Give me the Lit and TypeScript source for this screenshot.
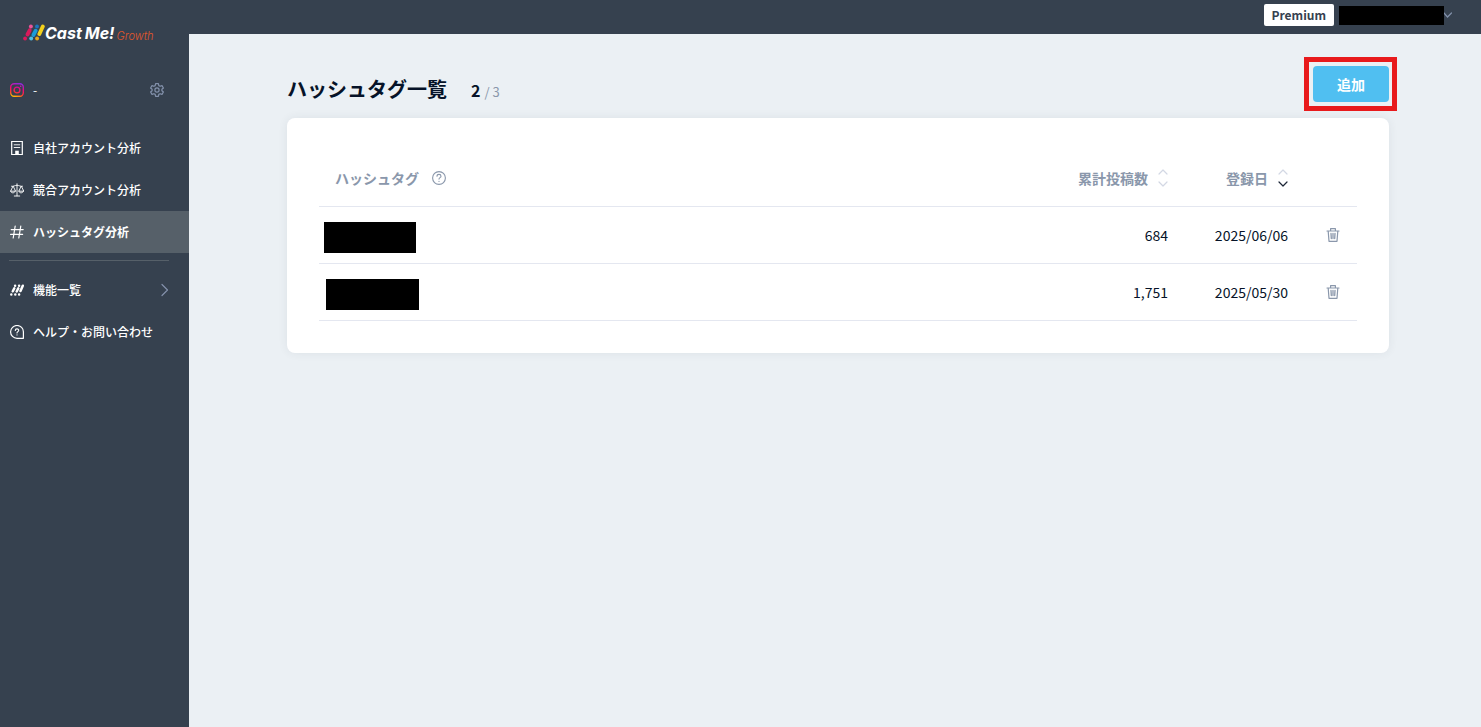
import { LitElement, html, css, svg, nothing } from "lit";
import { customElement, state } from "lit/decorators.js";
import { classMap } from "lit/directives/class-map.js";

const icon = (body: unknown, size = 14, box = 14) => html`<svg
  class="icon"
  width=${size}
  height=${size}
  viewBox="0 0 ${box} ${box}"
  fill="none"
  stroke="currentColor"
  stroke-linecap="round"
  stroke-linejoin="round"
  aria-hidden="true"
>${body}</svg>`;

const icons = {
  building: svg`<path d="M1.700 13.500V.5h10.600v13z" stroke-width="1.200" stroke-linejoin="miter"/><path d="M4.200 3.800h5.600M4.200 6.500h5.600" stroke-width=".9"/><path d="M5.200 13.500V9.700h3.600v3.800z" fill="currentColor" stroke="none"/>`,
  scales: svg`<path d="M7 .8v12M4.300 13h5.400M1.500 3.300c2 .4 3.500-1 5.500-1s3.500 1.400 5.500 1M2.900 3.400.6 8.200h4.600zM11.100 3.400 8.800 8.200h4.600zM.6 8.200c.3 2.300 4.300 2.300 4.600 0M8.800 8.200c.3 2.300 4.300 2.300 4.600 0" stroke-width=".9"/>`,
  hash: svg`<path d="M5.200 1 3.200 13M10.800 1l-2 12M1.200 4.600h12M.6 9.400h12" stroke-width="1.200"/>`,
  bars: svg`<g stroke-width="2.500"><path d="M5.100 2.700v0M4.300 5.300 2.800 8.300M1.300 11.500v0M9.100 2.700v0M8.300 5.300 6.700 8.500M5.300 11.500v0M12.800 2.700 10.500 8M9.100 11.500v0"/></g>`,
  help: svg`<path d="M13.400 13.300H7A6.400 6.400 0 1 1 13.400 7z" stroke-width="1.200"/><path d="M5.300 5.500c0-2.100 3.400-2.100 3.400-.1 0 1.200-1.700 1.200-1.700 2.500M7 9.800v.2" stroke-width="1.100"/>`,
  question: svg`<circle cx="7" cy="7" r="6.400" stroke-width="1.100"/><path d="M5 5.300c0-2.600 4-2.500 4-.1 0 1.500-2 1.400-2 2.900M7 10.300v.2" stroke-width="1.100"/>`,
  gear: svg`<path d="M5.600.7h2.800l.4 1.900 1.300.7 1.900-.7 1.400 2.400-1.500 1.300v1.400l1.500 1.300-1.400 2.400-1.900-.7-1.300.7-.4 1.900H5.600l-.4-1.900-1.300-.7-1.900.7L.6 9l1.500-1.300V6.300L.6 5 2 2.600l1.900.7 1.300-.7z" stroke-width="1.200"/><circle cx="7" cy="7" r="2.100" stroke-width="1.200"/>`,
  trash: svg`<path d="M1 3h12M4.600 2.800V.7h4.800v2.100M2.200 3.200l.8 10.100h8l.8-10.100" stroke-width="1.200"/><path d="M5 5.500l.3 5M7 5.500v5M9 5.500l-.3 5" stroke-width="1.300"/>`,
  right: svg`<path d="M4 1.500 9.500 7 4 12.500" stroke-width="1.200"/>`,
};

interface MenuItem {
  label: string;
  icon: keyof typeof icons;
  current?: boolean;
  more?: boolean;
}

const analysisMenu: MenuItem[] = [
  { label: "自社アカウント分析", icon: "building" },
  { label: "競合アカウント分析", icon: "scales" },
  { label: "ハッシュタグ分析", icon: "hash", current: true },
];

const supportMenu: MenuItem[] = [
  { label: "機能一覧", icon: "bars", more: true },
  { label: "ヘルプ・お問い合わせ", icon: "help" },
];

const rows = [
  { posts: 684, date: "2025/06/06", wide: false },
  { posts: 1751, date: "2025/05/30", wide: true },
];

@customElement("app-sidebar")
class AppSidebar extends LitElement {
  static styles = css`
    :host {
      display: block;
      box-sizing: border-box;
      padding-top: 22px;
      background: #36414f;
      color: #fff;
    }
    .icon {
      display: block;
      flex: none;
    }
    .logo {
      display: flex;
      align-items: center;
      height: 22px;
      padding-left: 23px;
      color: #fff;
      text-decoration: none;
      white-space: nowrap;
    }
    .name {
      display: flex;
      gap: 3px;
      font: italic 700 16px/22px Inter, sans-serif;
    }
    .product {
      margin: 5px 0 0 2px;
      color: #e2572b;
      font: italic 300 11px/18px Inter, sans-serif;
    }
    .account {
      display: flex;
      align-items: center;
      gap: 9px;
      height: 42px;
      margin: 25px 25px 16px 10px;
      font-size: 12px;
    }
    .settings {
      margin-left: auto;
      padding: 0;
      border: 0;
      background: none;
      color: #8391ab;
    }
    .item {
      display: flex;
      align-items: center;
      gap: 9px;
      height: 42px;
      padding: 0 17px 0 10px;
      color: #fff;
      font-size: 12px;
      font-weight: 500;
      text-decoration: none;
      white-space: nowrap;
    }
    .current {
      background: #566069;
      font-weight: 700;
    }
    .more {
      margin-left: auto;
      color: #8391ab;
    }
    .divider {
      height: 1px;
      margin: 7px 20px 8px 9px;
      border: 0;
      background: #566069;
    }
  `;

  private item(entry: MenuItem) {
    return html`<a
      href="#"
      class=${classMap({ item: true, current: !!entry.current })}
      aria-current=${entry.current ? "page" : nothing}
      >${icon(icons[entry.icon])}<span>${entry.label}</span>${entry.more
        ? html`<span class="more">${icon(icons.right)}</span>`
        : nothing}</a
    >`;
  }

  render() {
    return html`
      <a class="logo" href="#">
        <svg width="22" height="18" viewBox="0 0 22 18" fill="none" stroke-linecap="round" stroke-width="3.900" aria-hidden="true">
          <path stroke="#d91a5b" d="M6.700 6.300 4.500 10.500" />
          <path stroke="#d91a5b" d="M2.100 14.500v0" />
          <path stroke="#e8549a" d="M7.900 2.500v0" />
          <path stroke="#1c9bd8" d="M12.700 6.700 10.400 11" />
          <path stroke="#1c75bc" d="M14 2.500v0" />
          <path stroke="#4fc0e8" d="M8.200 14.500v0" />
          <path stroke="#f3d11c" d="M19.800 2.500 16.400 10" />
          <path stroke="#e9a51c" d="M14.100 14.500v0" />
        </svg>
        <span class="name"><span>Cast</span> <span>Me!</span></span><span class="product">Growth</span>
      </a>
      <div class="account">
        <svg class="icon" width="14" height="14" viewBox="0 0 14 14" fill="none" aria-hidden="true">
          <defs>
            <linearGradient id="insta" gradientUnits="userSpaceOnUse" x1="9" y1="0" x2="5" y2="14">
              <stop offset="0" stop-color="#8a2be2" />
              <stop offset=".4" stop-color="#f0077e" />
              <stop offset=".75" stop-color="#ff3b30" />
              <stop offset="1" stop-color="#ffc400" />
            </linearGradient>
          </defs>
          <rect x=".7" y=".7" width="12.600" height="12.600" rx="3.500" stroke="url(#insta)" stroke-width="1.400" />
          <circle cx="7" cy="7" r="2.900" stroke="url(#insta)" stroke-width="1.400" />
          <circle cx="10.700" cy="3.300" r=".8" fill="#d01bb0" />
        </svg>
        <span>-</span>
        <button class="settings" aria-label="設定">${icon(icons.gear)}</button>
      </div>
      <nav>
        ${analysisMenu.map((entry) => this.item(entry))}
        <hr class="divider" />
        ${supportMenu.map((entry) => this.item(entry))}
      </nav>
    `;
  }
}

@customElement("hashtag-table")
class HashtagTable extends LitElement {
  @state() private sortKey = "date";

  static styles = css`
    :host {
      display: block;
      padding: 32px;
      border-radius: 8px;
      background: #fff;
      box-shadow: 0 0 10px rgba(54, 65, 79, 0.08);
    }
    .icon {
      display: block;
      flex: none;
    }
    .table {
      width: 100%;
      border-collapse: separate;
      border-spacing: 0;
      table-layout: fixed;
      font-size: 14px;
    }
    .head,
    .cell {
      box-sizing: border-box;
      height: 57px;
      padding: 0 16px;
      border-bottom: 1px solid #e4e7f0;
      text-align: right;
    }
    .head {
      color: #8a97ab;
      font-weight: 700;
    }
    .tag {
      padding-left: 5px;
    }
    .title,
    .sort {
      display: flex;
      align-items: center;
    }
    .title {
      gap: 13px;
    }
    .sort {
      gap: 10px;
      margin-left: auto;
      padding: 0;
      border: 0;
      background: none;
      color: inherit;
      font: inherit;
      white-space: nowrap;
    }
    .posts {
      width: 140px;
    }
    .date {
      width: 120px;
    }
    .action {
      width: 53px;
    }
    .arrow {
      stroke: #d3d8e4;
    }
    .active {
      stroke: #1b2536;
    }
    .mask {
      display: block;
      width: 92px;
      height: 31px;
      margin-top: 4px;
      background: #000;
    }
    .wide {
      width: 93px;
      margin-left: 2px;
    }
    .delete {
      display: block;
      margin: 0 auto;
      padding: 0;
      border: 0;
      background: none;
      color: #8a97ab;
    }
    .action-cell {
      padding: 0 8px 0 12px;
    }
  `;

  private sortButton(key: string, label: string) {
    return html`<button class="sort" @click=${() => (this.sortKey = key)}>
      ${label}
      <svg width="10" height="18" viewBox="0 0 10 18" fill="none" stroke-width="1.200" stroke-linecap="round" stroke-linejoin="round" aria-hidden="true">
        <path class="arrow" d="M1 5 5 1l4 4" />
        <path class=${classMap({ arrow: true, active: this.sortKey === key })} d="M1 13l4 4 4-4" />
      </svg>
    </button>`;
  }

  render() {
    return html`<table class="table">
      <thead>
        <tr>
          <th class="head"><span class="title">ハッシュタグ ${icon(icons.question)}</span></th>
          <th class="head posts">${this.sortButton("posts", "累計投稿数")}</th>
          <th class="head date">${this.sortButton("date", "登録日")}</th>
          <th class="head action"></th>
        </tr>
      </thead>
      <tbody>
        ${rows.map(
          (row) => html`<tr>
            <td class="cell tag"><span class=${classMap({ mask: true, wide: row.wide })}></span></td>
            <td class="cell">${row.posts.toLocaleString("en-US")}</td>
            <td class="cell">${row.date}</td>
            <td class="cell action-cell"><button class="delete" aria-label="削除">${icon(icons.trash)}</button></td>
          </tr>`
        )}
      </tbody>
    </table>`;
  }
}

@customElement("app-root")
class AppRoot extends LitElement {
  static styles = css`
    :host {
      display: grid;
      grid-template: 34px 1fr / 189px 1fr;
      min-height: 100vh;
      background: #ebf0f4;
      color: #061328;
      font-family: "Noto Sans CJK JP", sans-serif;
      font-size: 14px;
      line-height: 20px;
    }
    .side {
      grid-row: 1 / 3;
    }
    .top {
      display: flex;
      align-items: center;
      justify-content: flex-end;
      padding: 0 29px 4px 0;
      background: #36414f;
    }
    .plan {
      height: 22px;
      padding: 0 8px;
      border-radius: 2px;
      background: #fff;
      color: #36414f;
      font-size: 12px;
      font-weight: 700;
      line-height: 22px;
    }
    .user {
      display: flex;
      align-items: center;
      margin-left: 5px;
      padding: 0;
      border: 0;
      background: none;
      color: #8391ab;
    }
    .mask {
      width: 105px;
      height: 19px;
      background: #000;
    }
    .main {
      min-width: 0;
      padding: 32px 92px 32px 98px;
    }
    .bar {
      display: flex;
      align-items: flex-start;
      justify-content: space-between;
      height: 52px;
    }
    .heading {
      display: flex;
      align-items: baseline;
      padding-top: 8px;
    }
    .title {
      margin: 0 24px 0 0;
      font-size: 20px;
      line-height: 30px;
    }
    .count {
      font-size: 16px;
      font-weight: 700;
    }
    .limit {
      margin-left: 4px;
      color: #8a97ab;
      font-size: 13px;
    }
    .spot {
      position: relative;
    }
    .add {
      width: 76px;
      height: 36px;
      padding: 0;
      border: 0;
      border-radius: 4px;
      background: #50bff1;
      color: #fff;
      font: inherit;
      font-weight: 700;
    }
    .ring {
      position: absolute;
      inset: -9px -8px -9px -9px;
      border: 5px solid #e81a1c;
      pointer-events: none;
    }
  `;

  render() {
    return html`
      <app-sidebar class="side"></app-sidebar>
      <header class="top">
        <span class="plan">Premium</span>
        <button class="user" aria-label="アカウント">
          <span class="mask"></span>
          <svg width="8" height="6" viewBox="0 0 8 6" fill="none" stroke="currentColor" stroke-width="1.200" stroke-linecap="round" aria-hidden="true">
            <path d="M0 1l3.500 4L7.500 1" />
          </svg>
        </button>
      </header>
      <main class="main">
        <div class="bar">
          <div class="heading">
            <h1 class="title">ハッシュタグ一覧</h1>
            <span class="count">2</span><span class="limit">/ 3</span>
          </div>
          <div class="spot">
            <button class="add">追加</button>
            <span class="ring"></span>
          </div>
        </div>
        <hashtag-table></hashtag-table>
      </main>
    `;
  }
}
